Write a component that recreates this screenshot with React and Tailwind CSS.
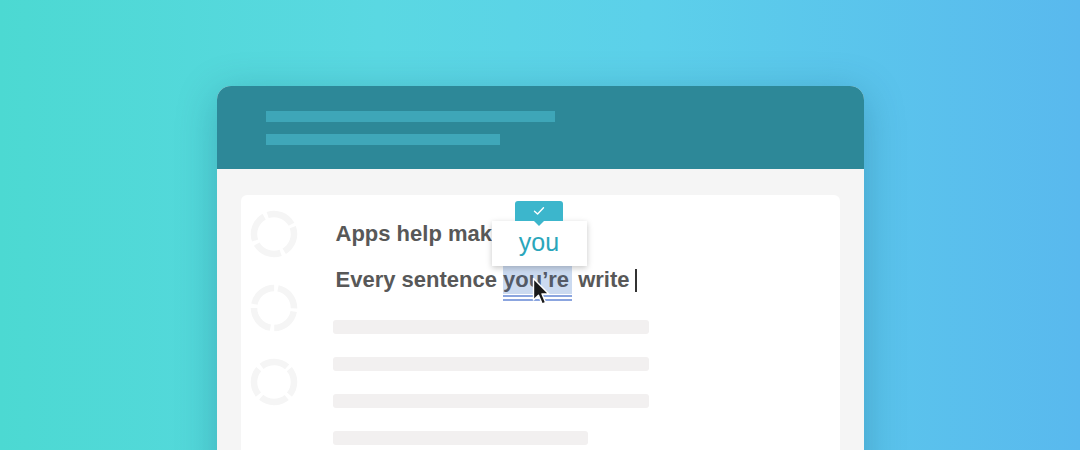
import React from 'react';

const Ring = ({ rotate = 0 }) => (
    <svg width="48" height="48" viewBox="0 0 48 48">
        <circle
            cx="24"
            cy="24"
            r="20"
            fill="none"
            stroke="#f5f5f5"
            strokeWidth="6.5"
            strokeDasharray="27.4 4"
            transform={`rotate(${rotate} 24 24)`}
        />
    </svg>
);

const Bar = ({ w }) => <div className={`h-[14px] rounded-[3px] bg-[#f2f0f0] ${w}`} />;

export default function App() {
    return (
        <div
            className="w-[1080px] h-[450px] overflow-hidden flex justify-center pt-[86px]"
            style={{ fontFamily: '"Liberation Sans", Arial, sans-serif' }}
        >
            <div className="absolute inset-0 -z-10 bg-[linear-gradient(90deg,#4cd9d2_0%,#5ad8e2_35%,#5cd0ea_60%,#59b9ee_100%)]" />
            <div className="w-[647px] h-[420px] rounded-t-[14px] overflow-hidden bg-[#f5f5f5] shadow-[0_8px_40px_rgba(10,70,100,0.28)]">
                {/* header */}
                <div className="h-[83px] bg-[#2d8898] pl-[49px] pt-[25px] flex flex-col gap-[12px]">
                    <div className="w-[289px] h-[11px] bg-[#3ea6b8]" />
                    <div className="w-[234px] h-[11px] bg-[#3fa7b9]" />
                </div>

                {/* body */}
                <div className="px-[24px] pt-[26px]">
                    <div className="relative bg-white rounded-md flex h-[330px]">
                        <div className="w-[95px] pl-[9px] pt-[15px] flex flex-col gap-[26px]">
                            <Ring rotate={-20} />
                            <Ring rotate={10} />
                            <Ring rotate={-40} />
                        </div>

                        <div className="pt-[25px] text-[#585858] font-bold text-[22px] leading-[28px]">
                            <div>Apps help make</div>
                            <div className="mt-[18px] flex items-center">
                                <span className="whitespace-pre">Every sentence </span>
                                <span className="relative bg-[#cbdaf0] text-[#545a66] pr-[3px]">
                                    you’re
                                    <span className="absolute left-0 right-0 top-full mt-[1px] h-[2px] bg-[#8ba5df]" />
                                    <span className="absolute left-0 right-0 top-full mt-[5px] h-[2px] bg-[#8ba5df]" />
                                </span>
                                <span className="whitespace-pre"> write</span>
                                <span className="ml-[5px] w-[2px] h-[23px] bg-[#333]" />
                            </div>

                            <div className="mt-[26px] -ml-[3px] flex flex-col gap-[23px]">
                                <Bar w="w-[316px]" />
                                <Bar w="w-[316px]" />
                                <Bar w="w-[316px]" />
                                <Bar w="w-[255px]" />
                            </div>
                        </div>

                        {/* suggestion popup */}
                        <div className="absolute left-[251px] top-[26px] w-[95px] h-[45px] bg-white shadow-[0_2px_6px_rgba(0,0,0,0.22)] pt-[9px] text-center">
                            <span className="block text-[#2aa6bb] text-[25px] leading-[25px] font-normal">you</span>
                        </div>
                        <div className="absolute left-[274px] top-[6px] w-[48px] h-[20px] bg-[#3cb6cc] rounded-t-[3px] flex items-center justify-center">
                            <svg width="12" height="10" viewBox="0 0 12 10">
                                <path d="M1.5 5.2 L4.6 8 L10.5 1.8" fill="none" stroke="#fff" strokeWidth="1.4" strokeLinecap="round" strokeLinejoin="round" />
                            </svg>
                            <div className="absolute left-1/2 -translate-x-1/2 top-full w-0 h-0 border-l-[5px] border-r-[5px] border-t-[5px] border-l-transparent border-r-transparent border-t-[#3cb6cc]" />
                        </div>

                        {/* mouse pointer */}
                        <svg className="absolute left-[291px] top-[82px]" width="20" height="30" viewBox="0 0 20 30">
                            <path
                                d="M1.5 1.5 L1.5 23 L6.5 18.2 L10.2 27 L13.6 25.6 L10 17 L16.8 17 Z"
                                fill="#1a1a1a"
                                stroke="#fff"
                                strokeWidth="1.4"
                                strokeLinejoin="round"
                            />
                        </svg>
                    </div>
                </div>
            </div>
        </div>
    );
}
